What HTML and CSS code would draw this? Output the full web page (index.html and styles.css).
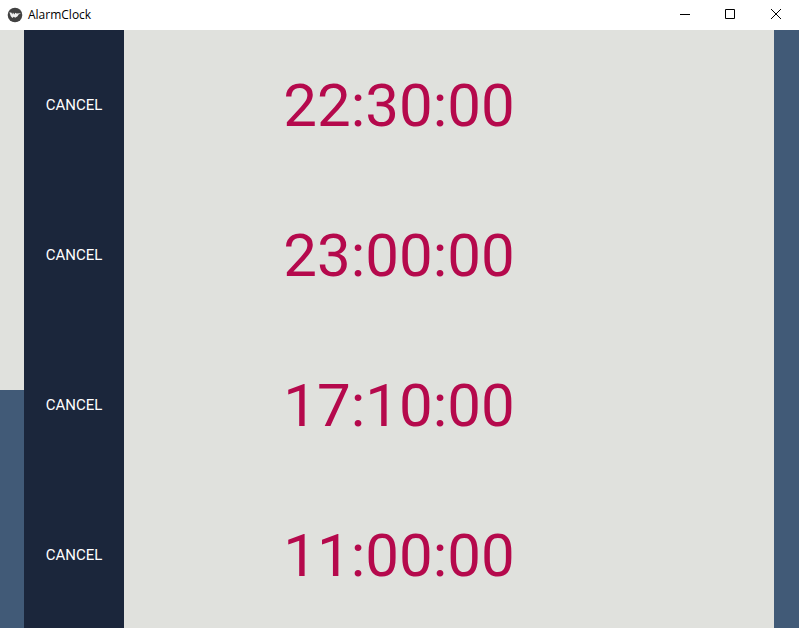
FILE: index.html
```html
<!DOCTYPE html>
<html lang="en">
<head>
<meta charset="utf-8">
<title>AlarmClock</title>
<link rel="stylesheet" href="styles.css">
</head>
<body>
<header class="titlebar">
  <svg class="logo" viewBox="0 0 16 16" aria-hidden="true">
    <circle cx="8" cy="8" r="7.3" fill="#424242"/>
    <path d="M2.4 5.2 4.6 5.8 5.2 7.6 6 5.4 7.4 7.6 8.2 5.8 9.6 6.6 14 6.2 11.6 7.4 10.6 9.2 8.2 10.8 6.8 9.8 5.4 11 3.8 9.2Z" fill="#f0f0f0"/>
  </svg>
  <h1 class="title">AlarmClock</h1>
  <div class="controls">
    <button class="control" type="button" aria-label="Minimize"><svg viewBox="0 0 12 12"><path d="M2 5.5H12"/></svg></button>
    <button class="control" type="button" aria-label="Maximize"><svg viewBox="0 0 12 12"><path d="M1.5 .5H10.5V9.5H1.5Z"/></svg></button>
    <button class="control" type="button" aria-label="Close"><svg viewBox="0 0 12 12"><path d="M1 0 11 10M11 0 1 10"/></svg></button>
  </div>
</header>
<main class="screen">
  <div class="gutter"></div>
  <ul class="alarms">
    <li class="alarm"><button class="cancel" type="button">CANCEL</button><time class="time">22:30:00</time></li>
    <li class="alarm"><button class="cancel" type="button">CANCEL</button><time class="time">23:00:00</time></li>
    <li class="alarm"><button class="cancel" type="button">CANCEL</button><time class="time">17:10:00</time></li>
    <li class="alarm"><button class="cancel" type="button">CANCEL</button><time class="time">11:00:00</time></li>
  </ul>
</main>
</body>
</html>
```
FILE: styles.css
```css
* {
  box-sizing: border-box;
}

body {
  margin: 0;
  height: 100vh;
  display: flex;
  flex-direction: column;
  overflow: hidden;
  background: #415a77;
  font-family: Roboto, sans-serif;
}

button {
  border: 0;
  padding: 0;
  font: inherit;
}

.titlebar {
  flex: none;
  display: flex;
  align-items: center;
  height: 30px;
  padding-left: 7px;
  background: #fff;
}

.logo {
  width: 16px;
  height: 16px;
  margin-right: 5px;
}

.title {
  flex: 1;
  margin: 0;
  font: 400 12px/16px "Open Sans", sans-serif;
  color: #000;
}

.controls {
  display: flex;
  height: 100%;
}

.control {
  display: flex;
  align-items: center;
  justify-content: center;
  width: 46px;
  background: none;
}

.control svg {
  width: 12px;
  height: 12px;
  fill: none;
  stroke: #000;
}

.screen {
  flex: 1;
  min-height: 0;
  display: grid;
  grid-template-columns: 24px 1fr 25px;
}

.gutter {
  height: 360px;
  background: #e0e1dd;
}

.alarms {
  margin: 0;
  padding: 0;
  list-style: none;
  background: #e0e1dd;
}

.alarm {
  display: grid;
  grid-template-columns: 100px 1fr 100px;
  height: 150px;
}

.cancel {
  background: #1b263b;
  color: #fff;
  font-size: 15px;
}

.time {
  align-self: center;
  padding-top: 2px;
  text-align: center;
  font-size: 60px;
  line-height: 70px;
  color: #b5094c;
}
```
